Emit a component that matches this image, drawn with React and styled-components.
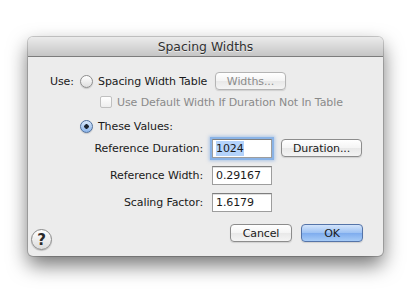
import React from 'react';
import styled, { createGlobalStyle } from 'styled-components';

const Global = createGlobalStyle`
	html, body {
		margin: 0;
		background: #ffffff;
	}
	body {
		font-family: "Lucida Grande", "DejaVu Sans", sans-serif;
		font-size: 11px;
		letter-spacing: -0.1px;
		color: #1a1a1a;
	}
`;

const Page = styled.div`
	width: 411px;
	height: 292px;
	padding: 37px 0 0 28px;
	box-sizing: border-box;
`;

const Window = styled.div`
	width: 355px;
	height: 219px;
	background: #ececec;
	border-radius: 5px;
	box-shadow: 0 9px 20px rgba(0, 0, 0, 0.55), 0 0 0 1px rgba(0, 0, 0, 0.18);
	display: flex;
	flex-direction: column;
	overflow: hidden;
`;

const TitleBar = styled.div`
	height: 19px;
	border-bottom: 1px solid #7c7c7c;
	background: linear-gradient(#ebebeb, #c5c5c5);
	display: flex;
	align-items: center;
	justify-content: center;
	font-size: 12.4px;
	letter-spacing: 0;
	color: #303030;
	text-shadow: 0 1px 0 rgba(255, 255, 255, 0.6);
`;

const Content = styled.div`
	flex: 1;
	display: flex;
	flex-direction: column;
	padding-top: 14px;
`;

const Row = styled.div`
	height: ${p => p.$h}px;
	margin-top: ${p => p.$mt || 0}px;
	padding-left: ${p => p.$pl || 0}px;
	display: flex;
	align-items: center;
`;

const UseLabel = styled.span`
	width: 30px;
	margin-left: 22px;
`;

const Radio = styled.span`
	width: 13px;
	height: 13px;
	border-radius: 50%;
	box-sizing: border-box;
	border: 1px solid ${p => (p.$on ? '#4f6f9c' : '#8e8e8e')};
	background: ${p =>
		p.$on
			? 'radial-gradient(circle at 50% 50%, #1d2530 0 2px, transparent 2.5px), linear-gradient(#d8e7fa, #8db6ea)'
			: 'linear-gradient(#ffffff, #dedede)'};
	box-shadow: 0 1px 1px rgba(0, 0, 0, 0.15);
	margin-right: 5px;
	flex-shrink: 0;
`;

const Check = styled.span`
	width: 12px;
	height: 12px;
	border-radius: 2px;
	box-sizing: border-box;
	border: 1px solid #c0c0c0;
	background: linear-gradient(#ffffff, #eeeeee);
	margin-right: 5px;
`;

const Muted = styled.span`
	color: #8a8a8a;
`;

const Button = styled.button`
	font-family: inherit;
	font-size: 11px;
	letter-spacing: -0.1px;
	height: 18px;
	width: ${p => p.$w}px;
	padding: 0;
	margin-left: ${p => (p.$ml === 'auto' ? 'auto' : `${p.$ml || 0}px`)};
	margin-right: ${p => p.$mr || 0}px;
	border-radius: 4px;
	border: 1px solid ${p => (p.$primary ? '#5574a8' : p.$disabled ? '#b4b4b4' : '#8c8c8c')};
	background: ${p =>
		p.$primary
			? 'linear-gradient(#d3e4fb, #9cc1f3 50%, #7eacee 51%, #a6cbf7)'
			: 'linear-gradient(#ffffff, #f4f4f4 50%, #e8e8e8 51%, #f4f4f4)'};
	color: ${p => (p.$disabled ? '#8c8c8c' : '#1a1a1a')};
	box-shadow: 0 1px 1px rgba(0, 0, 0, 0.12);
`;

const FieldLabel = styled.span`
	width: 184px;
	text-align: right;
	padding-right: 9px;
	box-sizing: border-box;
`;

const Field = styled.div`
	width: ${p => p.$w}px;
	height: 19px;
	box-sizing: border-box;
	background: #ffffff;
	border: 1px solid #9d9d9d;
	border-top-color: #7e7e7e;
	box-shadow: ${p => (p.$focus ? '0 0 0 2px #8ab3e6, 0 0 3px 3px rgba(110, 160, 225, 0.5)' : 'inset 0 1px 0 #e0e0e0')};
	display: flex;
	align-items: center;
	padding-left: 3px;
`;

const Selected = styled.span`
	background: #b4d3fb;
	line-height: 15px;
`;

const Footer = styled.div`
	flex: 1;
	display: flex;
	align-items: flex-start;
	padding: 10px 20px 0 3px;
`;

const Help = styled.span`
	width: 21px;
	height: 21px;
	margin-top: 5px;
	border-radius: 50%;
	box-sizing: border-box;
	border: 1px solid #8a8a8a;
	background: linear-gradient(#ffffff, #dcdcdc);
	box-shadow: 0 1px 1px rgba(0, 0, 0, 0.2);
	display: flex;
	align-items: center;
	justify-content: center;
	font-size: 15px;
	font-weight: bold;
	color: #2a2a2a;
`;

const Spacer = styled.div`
	flex: 1;
`;

export default function App() {
	return (
		<Page>
			<Global />
			<Window>
				<TitleBar>Spacing Widths</TitleBar>
				<Content>
					<Row $h={20}>
						<UseLabel>Use:</UseLabel>
						<Radio />
						<span>Spacing Width Table</span>
						<Button $disabled $w={71} $ml="auto" $mr={97}>Widths...</Button>
					</Row>
					<Row $h={22} $pl={72}>
						<Check />
						<Muted>Use Default Width If Duration Not In Table</Muted>
					</Row>
					<Row $h={20} $mt={3} $pl={52}>
						<Radio $on />
						<span>These Values:</span>
					</Row>
					<Row $h={24}>
						<FieldLabel>Reference Duration:</FieldLabel>
						<Field $w={60} $focus><Selected>1024</Selected></Field>
						<Button $w={81} $ml={9}>Duration...</Button>
					</Row>
					<Row $h={24} $mt={3}>
						<FieldLabel>Reference Width:</FieldLabel>
						<Field $w={60}>0.29167</Field>
					</Row>
					<Row $h={24} $mt={3}>
						<FieldLabel>Scaling Factor:</FieldLabel>
						<Field $w={60}>1.6179</Field>
					</Row>
					<Footer>
						<Help>?</Help>
						<Spacer />
						<Button $w={62}>Cancel</Button>
						<Button $w={62} $ml={9} $primary>OK</Button>
					</Footer>
				</Content>
			</Window>
		</Page>
	);
}
